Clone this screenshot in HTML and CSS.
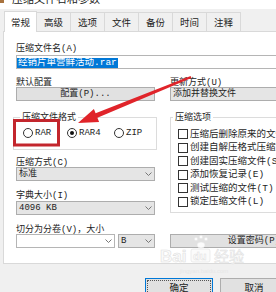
FILE: index.html
```html
<!DOCTYPE html>
<html lang="zh-CN">
<head>
<meta charset="utf-8">
<title>压缩文件名和参数</title>
<link rel="stylesheet" href="styles.css">
</head>
<body>
<div class="dlg">
  <div class="titlebar">
    <span class="appicon"></span>
    <span class="title">压缩文件名和参数</span>
  </div>
  <div class="tabs">
    <span class="tab active">常规</span>
    <span class="tab">高级</span>
    <span class="tab">选项</span>
    <span class="tab">文件</span>
    <span class="tab">备份</span>
    <span class="tab">时间</span>
    <span class="tab">注释</span>
  </div>
  <div class="page">
    <div class="lbl">压缩文件名(A)</div>
    <div class="input name"><span class="sel">经销片单营鲜活动.rar</span></div>
    <div class="cols">
      <div class="col left">
        <div class="lbl">默认配置</div>
        <div class="btn">配置(P)...</div>
        <fieldset class="group fmt">
          <legend>压缩文件格式</legend>
          <div class="radios">
            <span class="radio"><i class="rb"></i>RAR</span>
            <span class="radio"><i class="rb on"></i>RAR4</span>
            <span class="radio"><i class="rb"></i>ZIP</span>
          </div>
        </fieldset>
        <div class="lbl gap5">压缩方式(C)</div>
        <div class="combo"><span>标准</span><svg class="chev" width="7" height="4" viewBox="0 0 7 4"><polyline points="0.5,0.5 3.5,3.5 6.5,0.5" fill="none" stroke="#777" stroke-width="1"/></svg></div>
        <div class="lbl gap7">字典大小(I)</div>
        <div class="combo gap1"><span>4096 KB</span><svg class="chev" width="7" height="4" viewBox="0 0 7 4"><polyline points="0.5,0.5 3.5,3.5 6.5,0.5" fill="none" stroke="#777" stroke-width="1"/></svg></div>
        <div class="lbl gap7">切分为分卷(V)，大小</div>
        <div class="volrow">
          <div class="combo edit"><span></span><svg class="chev" width="7" height="4" viewBox="0 0 7 4"><polyline points="0.5,0.5 3.5,3.5 6.5,0.5" fill="none" stroke="#777" stroke-width="1"/></svg></div>
          <div class="combo unit"><span>B</span><svg class="chev" width="7" height="4" viewBox="0 0 7 4"><polyline points="0.5,0.5 3.5,3.5 6.5,0.5" fill="none" stroke="#777" stroke-width="1"/></svg></div>
        </div>
      </div>
      <div class="col right">
        <div class="lbl">更新方式(U)</div>
        <div class="combo"><span>添加并替换文件</span><svg class="chev" width="7" height="4" viewBox="0 0 7 4"><polyline points="0.5,0.5 3.5,3.5 6.5,0.5" fill="none" stroke="#777" stroke-width="1"/></svg></div>
        <fieldset class="group opts">
          <legend>压缩选项</legend>
          <div class="checks">
            <div class="chk"><i class="cb"></i>压缩后删除原来的文件(D)</div>
            <div class="chk"><i class="cb"></i>创建自解压格式压缩文件(X)</div>
            <div class="chk"><i class="cb"></i>创建固实压缩文件(S)</div>
            <div class="chk"><i class="cb"></i>添加恢复记录(E)</div>
            <div class="chk"><i class="cb"></i>测试压缩的文件(T)</div>
            <div class="chk"><i class="cb"></i>锁定压缩文件(L)</div>
          </div>
        </fieldset>
        <div class="btn pwd">设置密码(P)...</div>
      </div>
    </div>
  </div>
  <div class="footer">
    <div class="fbtn default"><span>确定</span></div>
    <div class="fbtn">取消</div>
    <div class="fbtn">帮助</div>
  </div>
  <svg class="overlay" width="276" height="292" viewBox="0 0 276 292">
    <g class="wm">
      <text x="160" y="262" font-size="17" font-weight="bold" font-family="Liberation Sans, sans-serif" fill="#fbfbfb" stroke="#e0e0e0" stroke-width="0.6">Bai</text>
      <circle cx="196" cy="239" r="1.8" fill="#fbfbfb" stroke="#e0e0e0" stroke-width="0.5"/>
      <circle cx="201" cy="237" r="1.8" fill="#fbfbfb" stroke="#e0e0e0" stroke-width="0.5"/>
      <circle cx="206" cy="239" r="1.8" fill="#fbfbfb" stroke="#e0e0e0" stroke-width="0.5"/>
      <ellipse cx="201" cy="245" rx="4" ry="3" fill="#fbfbfb" stroke="#e0e0e0" stroke-width="0.5"/>
      <rect x="191" y="249" width="19" height="13" rx="2" fill="#fbfbfb" stroke="#e0e0e0" stroke-width="0.6"/>
      <text x="193" y="260" font-size="11" font-weight="bold" font-family="Liberation Sans, sans-serif" fill="#ffffff" stroke="#e0e0e0" stroke-width="0.5">du</text>
      <text x="214" y="262" font-size="15" font-family="Noto Sans CJK SC, sans-serif" fill="#fbfbfb" stroke="#e0e0e0" stroke-width="0.5">经验</text>
      <text x="180" y="273" font-size="6" font-family="Liberation Sans, sans-serif" fill="#e6e6e6">jingyan.baidu.com</text>
    </g>
    <rect x="14.5" y="120.5" width="44" height="24.5" fill="none" stroke="#c3262d" stroke-width="3"/>
    <polygon points="190.6,76.1 191.4,77.9 97.4,117.8 99.1,122.0 78,123 93.9,109.0 95.6,113.2" fill="#e0242a"/>
  </svg>
</div>
</body>
</html>
```
FILE: styles.css
```css
* { box-sizing: border-box; }
html, body { margin: 0; padding: 0; }
body {
  width: 276px;
  height: 292px;
  overflow: hidden;
  background: #f0f0f0;
  color: #1e1e1e;
  font-family: "Noto Sans CJK SC", "Liberation Sans", sans-serif;
  line-height: 12px;
}
.dlg {
  position: relative;
  width: 372px;
  height: 292px;
  padding-left: 3px;
  background: #f0f0f0;
}
.titlebar {
  height: 9px;
  margin-left: -3px;
  background: #fff;
  overflow: hidden;
  display: flex;
  align-items: flex-start;
}
.appicon {
  flex: none;
  width: 4px;
  height: 3px;
  background: #a8733f;
}
.title {
  margin: -8px 0 0 8px;
  font-size: 11px;
  line-height: 12px;
  color: #222;
  white-space: nowrap;
}
.tabs {
  display: flex;
  align-items: flex-end;
  height: 22px;
  padding-left: 1px;
}
.tab {
  height: 19px;
  line-height: 18px;
  padding: 0 7px;
  margin-left: -1px;
  border: 1px solid #d9d9d9;
  border-bottom: none;
  background: #f0f0f0;
  font-size: 9.5px;
  white-space: nowrap;
  color: #222;
}
.tab:first-child { margin-left: 0; }
.tab.active {
  position: relative;
  z-index: 1;
  height: 21px;
  line-height: 20px;
  padding: 0 6px;
  margin-bottom: -1px;
  background: #fff;
}
.page {
  height: 233px;
  margin-right: 3px;
  border: 1px solid #d9d9d9;
  background: #fff;
  padding: 9px 14px 0 12px;
}
.lbl, .btn, .combo, legend, .radio {
  font-family: "Liberation Mono", "Noto Sans CJK SC", monospace;
  font-size: 9px;
  line-height: 12px;
  white-space: nowrap;
}
.lbl {
  height: 12px;
  padding-top: 1.5px;
}
.gap5 { margin-top: 5px; }
.gap7 { margin-top: 7px; }
.gap1 { margin-top: 1px; }
.input.name {
  margin-top: 2px;
  height: 14px;
  border: 1px solid #b5b5b5;
  background: #fff;
  padding: 2px 0 0 0;
  line-height: 10px;
  font-size: 9.5px;
  overflow: hidden;
}
.sel {
  display: block;
  width: max-content;
  height: 10px;
  line-height: 10px;
  padding: 0 1px;
  background: #0078d7;
  color: #fff;
  font-family: "Liberation Mono", "Noto Sans CJK SC", monospace;
  font-size: 9.5px;
  white-space: nowrap;
}
.cols {
  display: flex;
  gap: 15px;
  margin-top: 6px;
}
.col {
  display: flex;
  flex-direction: column;
}
.col.left { flex: none; width: 139px; }
.col.right { flex: 1; min-width: 0; }
.btn {
  height: 14px;
  border: 1px solid #adadad;
  background: #e1e1e1;
  text-align: center;
}
.combo {
  height: 14px;
  border: 1px solid #adadad;
  background: #e5e5e5;
  display: flex;
  align-items: center;
  justify-content: space-between;
  padding: 0 2px 0 2px;
}
.chev { flex: none; }
.combo.edit {
  width: 99px;
  background: #fff;
  border-color: #b5b5b5;
}
.combo.unit { width: 37px; }
.volrow {
  display: flex;
  gap: 3px;
}
fieldset.group {
  margin: 10.5px 0 0 0;
  border: 1px solid #dcdcdc;
  min-width: 0;
}
legend {
  padding: 0 2px;
  height: 12px;
}
.group.fmt {
  margin-left: -3px;
  margin-right: -2px;
  padding: 0 0 10px 6px;
}
.radios {
  display: grid;
  grid-template-columns: 44px 47px auto;
  margin: 3.5px 0 0 3px;
}
.radio {
  display: flex;
  align-items: center;
  gap: 2px;
}
.rb {
  flex: none;
  width: 10px;
  height: 10px;
  border: 1px solid #333;
  border-radius: 50%;
  background: #fff;
  display: flex;
  align-items: center;
  justify-content: center;
}
.rb.on::after {
  content: "";
  width: 4px;
  height: 4px;
  border-radius: 50%;
  background: #111;
}
.group.opts {
  padding: 0 0 3.5px 2px;
}
.checks {
  margin: 4px 0 0 5px;
}
.chk {
  display: flex;
  align-items: center;
  gap: 2px;
  height: 13.5px;
  font-family: "Liberation Mono", "Noto Sans CJK SC", monospace;
  font-size: 9.5px;
  line-height: 13.5px;
  white-space: nowrap;
}
.cb {
  flex: none;
  width: 10px;
  height: 10px;
  border: 1px solid #333;
  background: #fff;
}
.btn.pwd { margin-top: auto; }
.footer {
  display: flex;
  gap: 7px;
  padding: 14px 0 0 142px;
}
.fbtn {
  flex: none;
  width: 68px;
  height: 18px;
  border: 1px solid #adadad;
  background: #e1e1e1;
  font-size: 9.5px;
  line-height: 16px;
  text-align: center;
  color: #222;
}
.fbtn.default {
  border-color: #0078d7;
  padding: 1px;
}
.fbtn.default span {
  display: block;
  height: 14px;
  line-height: 12px;
  border: 1px dotted #555;
}
.overlay {
  position: absolute;
  left: 0;
  top: 0;
  pointer-events: none;
}
```
